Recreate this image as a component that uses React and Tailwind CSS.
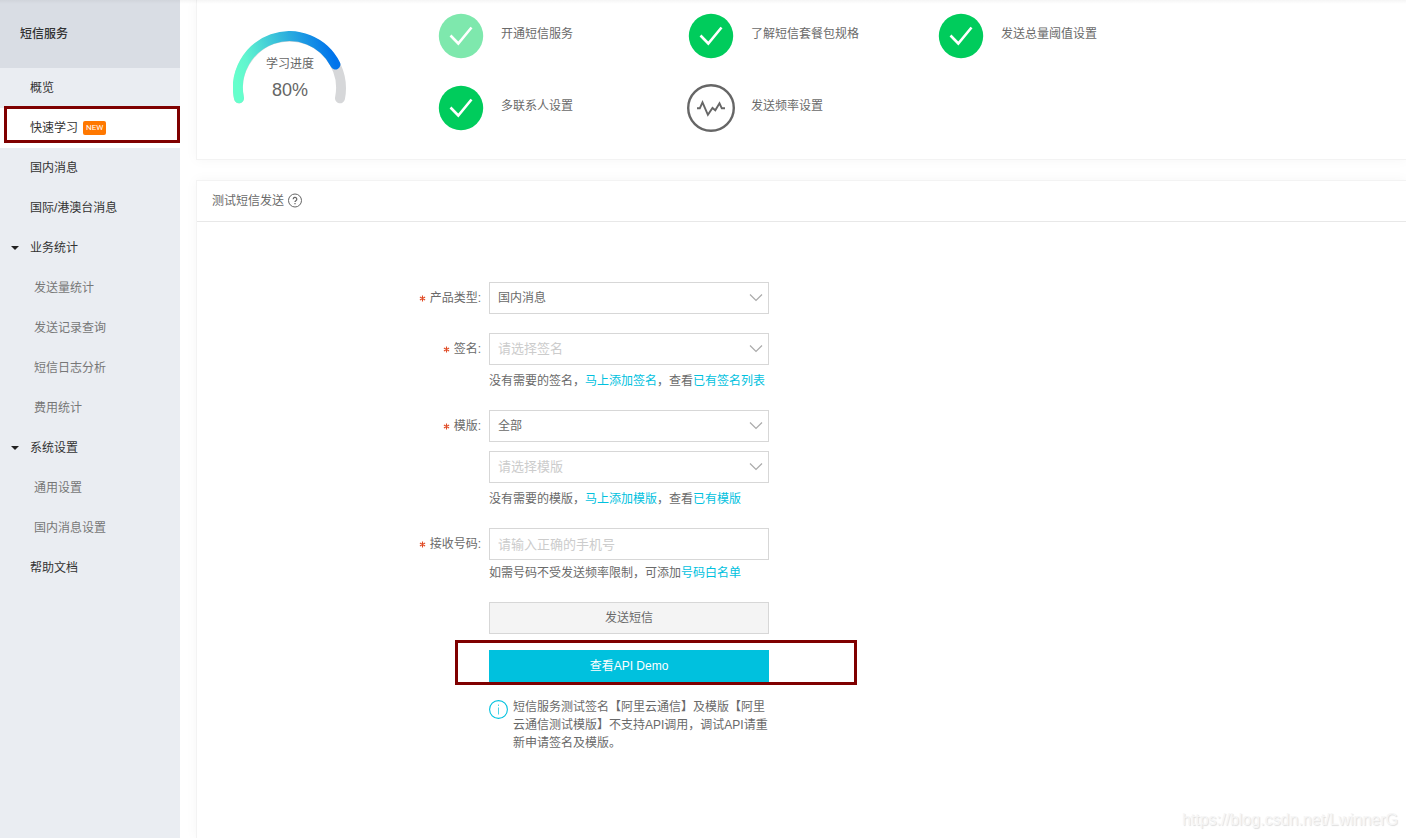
import { useState } from "react";

const groups = [
  {
    name: "业务统计",
    items: ["发送量统计", "发送记录查询", "短信日志分析", "费用统计"],
  },
  {
    name: "系统设置",
    items: ["通用设置", "国内消息设置"],
  },
];

const steps = [
  { name: "开通短信服务", status: "fixed" },
  { name: "了解短信套餐包规格", status: "done" },
  { name: "发送总量阈值设置", status: "done" },
  { name: "多联系人设置", status: "done" },
  { name: "发送频率设置", status: "todo" },
];

const NavLink = ({ children, active }) => (
  <a
    href="#"
    className={`relative flex h-10 items-center pl-[30px] text-[#333] ${
      active ? "bg-white" : "hover:bg-white/50"
    }`}
  >
    {children}
  </a>
);

const NavGroup = ({ name, items }) => {
  const [open, setOpen] = useState(true);

  return (
    <div>
      <button
        type="button"
        aria-expanded={open}
        onClick={() => setOpen(!open)}
        className="flex h-10 w-full items-center gap-[11px] pl-[11px] text-[#333]"
      >
        <svg
          width="8"
          height="4"
          viewBox="0 0 8 4"
          className={open ? "" : "-rotate-90"}
        >
          <path d="M0 0h8L4 4z" fill="#222" />
        </svg>
        {name}
      </button>
      {open &&
        items.map((item) => (
          <a
            key={item}
            href="#"
            className="flex h-10 items-center pl-[34px] text-[#777] hover:bg-white/50"
          >
            {item}
          </a>
        ))}
    </div>
  );
};

const Sidebar = () => (
  <aside className="w-[180px] shrink-0 bg-[#eaedf2]">
    <h1 className="flex h-[68px] items-center bg-[#d9dde4] pl-5 font-medium text-[#333]">
      短信服务
    </h1>
    <nav>
      <NavLink>概览</NavLink>
      <NavLink active>
        快速学习
        <span className="ml-[5px] rounded-xs bg-[#ff7800] px-[3px] font-[Roboto,sans-serif] text-[8px] leading-[14px] text-white">
          NEW
        </span>
        <span className="pointer-events-none absolute -top-0.5 right-0 left-1 h-[37px] border-3 border-[#7f0000]" />
      </NavLink>
      <NavLink>国内消息</NavLink>
      <NavLink>国际/港澳台消息</NavLink>
      {groups.map((group) => (
        <NavGroup key={group.name} name={group.name} items={group.items} />
      ))}
      <NavLink>帮助文档</NavLink>
    </nav>
  </aside>
);

const Gauge = () => (
  <div className="mt-[31px] grid w-[114px] shrink-0">
    <svg
      width="114"
      height="73"
      viewBox="0 0 114 73"
      fill="none"
      strokeWidth="10"
      strokeLinecap="round"
      className="col-start-1 row-start-1"
    >
      <defs>
        <linearGradient id="progress" gradientUnits="userSpaceOnUse" x1="6" y1="60" x2="103" y2="34">
          <stop offset="0" stopColor="#66ffcc" />
          <stop offset="0.15" stopColor="#60f5cf" />
          <stop offset="1" stopColor="#0073eb" />
        </linearGradient>
      </defs>
      <path d="M6 67.300A51.500 51.500 0 1 1 107 67.300" stroke="#d6d7d9" />
      <path d="M6 67.300A51.500 51.500 0 0 1 102.400 33.500" stroke="url(#progress)" />
    </svg>
    <div className="col-start-1 row-start-1 pt-[23px] text-center text-[#666]">
      <p className="leading-5">学习进度</p>
      <p className="mt-1 text-lg leading-6">80%</p>
    </div>
  </div>
);

const StepIcon = ({ status }) => {
  if (status === "todo") {
    return (
      <svg width="48" height="48" viewBox="0 0 48 48" fill="none" stroke="#666" className="shrink-0">
        <circle cx="24" cy="24" r="22.800" strokeWidth="2.400" />
        <path
          d="M10 24.300H12.800L15.500 18.300L20.900 30.800L25.500 24L28.300 26.300L32.500 19.300L34.800 24.300H38"
          strokeWidth="1.900"
        />
      </svg>
    );
  }

  return (
    <svg width="48" height="48" viewBox="0 0 48 48" fill="none" className="shrink-0">
      <circle cx="24" cy="24" r="22.200" fill={status === "fixed" ? "#7ee8ad" : "#00cc5c"} />
      <path d="M13.500 23.500L21.300 31.500L34.500 15.500" stroke="#fff" strokeWidth="2.600" />
    </svg>
  );
};

const Select = ({ id, label, placeholder, options }) => {
  const [value, setValue] = useState(placeholder ? "" : options[0]);

  return (
    <div className="grid items-center">
      <select
        id={id}
        aria-label={label}
        value={value}
        onChange={(e) => setValue(e.target.value)}
        className={`col-start-1 row-start-1 h-8 w-full appearance-none border border-[#d7d7d7] bg-white pr-8 pl-2 outline-none focus:border-[#00c1de] ${
          value ? "text-xs" : "text-[13px] text-[#ccc]"
        }`}
      >
        {placeholder && <option value="">{placeholder}</option>}
        {options.map((option) => (
          <option key={option}>{option}</option>
        ))}
      </select>
      <svg
        width="14"
        height="8"
        viewBox="0 0 14 8"
        fill="none"
        stroke="#aaa"
        strokeWidth="1.200"
        className="pointer-events-none col-start-1 row-start-1 mr-1.5 justify-self-end"
      >
        <path d="M1 .5l6 6 6-6" />
      </svg>
    </div>
  );
};

const Field = ({ label, htmlFor, className, children }) => (
  <div className={`flex gap-2 ${className}`}>
    <label
      htmlFor={htmlFor}
      className="flex h-8 w-[284px] shrink-0 items-center justify-end gap-1"
    >
      <svg width="7" height="7" viewBox="0 0 7 7" stroke="#e04a24" strokeWidth="1.100" aria-hidden="true">
        <path d="M3.500 .5v6M.9 2l5.200 3M.9 5l5.200-3" />
      </svg>
      {label}:
    </label>
    <div className="w-[280px]">{children}</div>
  </div>
);

const Link = ({ children }) => (
  <a href="#" className="text-[#00c1de] hover:underline">
    {children}
  </a>
);

const TestForm = () => {
  const [phone, setPhone] = useState("");

  return (
    <form onSubmit={(e) => e.preventDefault()} className="pt-[60px] pb-8">
      <Field label="产品类型" htmlFor="type" className="mb-[19px]">
        <Select id="type" options={["国内消息", "国际/港澳台消息"]} />
      </Field>

      <Field label="签名" htmlFor="sign" className="mb-[19px]">
        <Select id="sign" placeholder="请选择签名" options={["阿里云通信"]} />
        <p className="mt-1.5 whitespace-nowrap leading-5">
          没有需要的签名，<Link>马上添加签名</Link>，查看<Link>已有签名列表</Link>
        </p>
      </Field>

      <Field label="模版" htmlFor="kind" className="mb-[19px]">
        <div className="flex flex-col gap-[9px]">
          <Select id="kind" options={["全部"]} />
          <Select
            id="template"
            label="模版"
            placeholder="请选择模版"
            options={["阿里云通信测试模版"]}
          />
        </div>
        <p className="mt-1.5 whitespace-nowrap leading-5">
          没有需要的模版，<Link>马上添加模版</Link>，查看<Link>已有模版</Link>
        </p>
      </Field>

      <Field label="接收号码" htmlFor="phone" className="mb-[19px]">
        <input
          id="phone"
          type="tel"
          value={phone}
          onChange={(e) => setPhone(e.target.value)}
          placeholder="请输入正确的手机号"
          className="block h-8 w-full border border-[#d7d7d7] px-2 text-[13px] outline-none placeholder:text-[#ccc] focus:border-[#00c1de]"
        />
        <p className="mt-[3px] whitespace-nowrap leading-5">
          如需号码不受发送频率限制，可添加<Link>号码白名单</Link>
        </p>
      </Field>

      {/* ACTIONS */}
      <div className="ml-[292px] w-[280px]">
        <button
          type="submit"
          className="block h-8 w-full border border-[#d7d7d7] bg-[#f4f4f4]"
        >
          发送短信
        </button>
        <div className="relative mt-4">
          <button type="button" className="block h-8 w-full bg-[#00c1de] text-white">
            查看API Demo
          </button>
          <span className="pointer-events-none absolute -top-2.5 -left-[34px] h-[45px] w-[402px] border-3 border-[#7f0000]" />
        </div>
        <div className="mt-4 flex gap-[5px]">
          <svg
            width="19"
            height="19"
            viewBox="0 0 19 19"
            fill="none"
            stroke="#00c1de"
            className="mt-0.5 shrink-0"
          >
            <circle cx="9.500" cy="9.500" r="8.900" strokeWidth="1.100" />
            <path d="M9.500 7.500V14.500M9.500 4.500V6" strokeOpacity="0.700" />
          </svg>
          <p className="leading-[18px]">
            短信服务测试签名【阿里云通信】及模版【阿里云通信测试模版】不支持API调用，调试API请重新申请签名及模版。
          </p>
        </div>
      </div>
    </form>
  );
};

const App = () => {
  return (
    <div
      lang="zh-CN"
      className="relative flex min-h-screen bg-white font-['Liberation_Sans','Noto_Sans_CJK_SC',sans-serif] text-xs text-[#6a6a6a]"
    >
      <div className="pointer-events-none absolute inset-x-0 top-0 z-10 h-1 bg-linear-to-b from-black/4 to-transparent" />
      <Sidebar />

      <main className="flex min-w-0 flex-1 flex-col overflow-hidden pl-4">
        {/* PROGRESS */}
        <section className="flex gap-[90px] border-b border-l border-[#f3f3f3] pb-[27px] pl-9 shadow-[0_0_12px_rgba(0,0,0,0.04)]">
          <Gauge />
          <ul className="grid flex-1 grid-cols-[repeat(auto-fill,250px)] gap-y-6 pt-3">
            {steps.map((step) => (
              <li key={step.name} className="flex gap-4">
                <StepIcon status={step.status} />
                <span className="pt-3 leading-5">{step.name}</span>
              </li>
            ))}
          </ul>
        </section>

        {/* TEST SEND */}
        <section className="mt-5 flex-1 border-t border-l border-[#f3f3f3] shadow-[0_0_12px_rgba(0,0,0,0.04)]">
          <h2 className="flex h-[41px] items-center gap-1 border-b border-[#e8e8e8] pl-[15px]">
            测试短信发送
            <svg width="14" height="16" viewBox="0 0 14 16" fill="none" stroke="#666">
              <circle cx="7" cy="7.500" r="6.500" />
              <path d="M5.200 6.200a1.800 1.800 0 1 1 2.700 1.500q-.9.500-.9 1.400M7 10v1.200" strokeWidth="1.200" />
            </svg>
          </h2>
          <TestForm />
        </section>
      </main>

      <p className="pointer-events-none absolute right-2 bottom-2 text-base leading-5 text-[#f6f6f6] [text-shadow:1px_1px_1px_#dedede]">
        https://blog.csdn.net/LwinnerG
      </p>
    </div>
  );
};

export default App;
